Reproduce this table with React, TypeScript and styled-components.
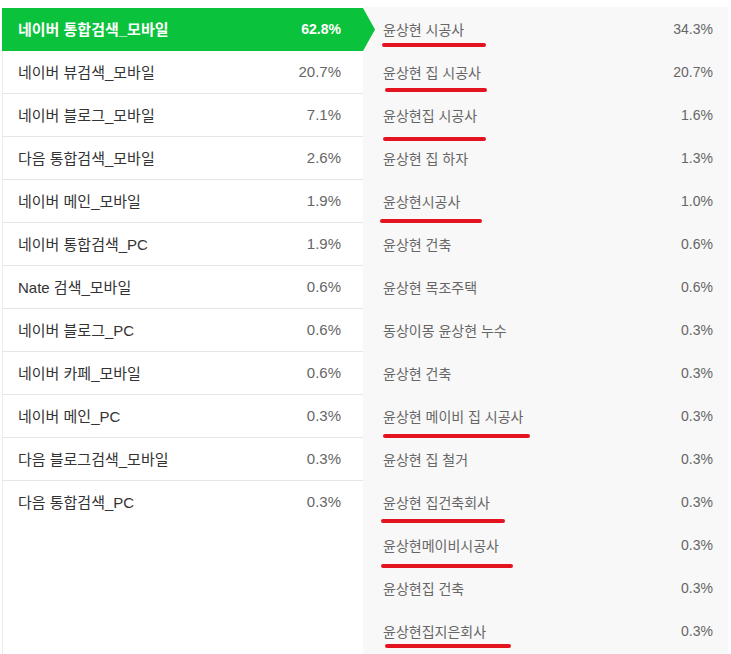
import React from "react";
import styled, { createGlobalStyle } from "styled-components";

const Global = createGlobalStyle`
  html, body { margin: 0; padding: 0; background: #ffffff; }
  body { font-family: "Liberation Sans", "Noto Sans CJK KR", sans-serif; }
`;

const Page = styled.div`
  display: flex;
  padding: 8px 3px 0 2px;
  height: 654px;
  box-sizing: border-box;
  overflow: hidden;
`;

const LeftPanel = styled.div`
  width: 361px;
  flex: none;
  border-left: 1px solid #ececec;
  box-sizing: border-box;
  background: #fff;
`;

const LeftRow = styled.div<{ $active?: boolean; $last?: boolean }>`
  position: relative;
  height: 43px;
  box-sizing: border-box;
  display: flex;
  align-items: center;
  justify-content: space-between;
  padding: 0 22px 2px 15px;
  margin-left: ${(p) => (p.$active ? "-1px" : "0")};
  padding-left: ${(p) => (p.$active ? "16px" : "15px")};
  background: ${(p) => (p.$active ? "#0bc23c" : "transparent")};
  border-bottom: ${(p) => (p.$active || p.$last ? "none" : "1px solid #e6e6e6")};
  color: ${(p) => (p.$active ? "#fff" : "#333")};
  font-weight: ${(p) => (p.$active ? 700 : 400)};
  z-index: ${(p) => (p.$active ? 2 : 0)};
`;

const Arrow = styled.svg`
  position: absolute;
  right: -12px;
  top: 0;
  width: 12px;
  height: 43px;
`;

const Name = styled.span<{ $size: number }>`
  font-size: ${(p) => p.$size}px;
  white-space: nowrap;
`;

const Pct = styled.span<{ $active?: boolean; $size: number }>`
  font-size: ${(p) => p.$size}px;
  color: ${(p) => (p.$active ? "#fff" : "#666")};
`;

const RightPanel = styled.div`
  flex: 1;
  background: #f8f8f8;
  margin-top: -1px;
  padding-top: 1px;
`;

const RightRow = styled.div`
  position: relative;
  height: 43px;
  box-sizing: border-box;
  display: flex;
  align-items: center;
  justify-content: space-between;
  padding: 0 15px 2px 20px;
  color: #666;
`;

const Mark = styled.span`
  position: absolute;
  height: 4px;
  border-radius: 2px;
  background: #e3141f;
`;

const leftData: [string, string][] = [
  ["네이버 통합검색_모바일", "62.8%"],
  ["네이버 뷰검색_모바일", "20.7%"],
  ["네이버 블로그_모바일", "7.1%"],
  ["다음 통합검색_모바일", "2.6%"],
  ["네이버 메인_모바일", "1.9%"],
  ["네이버 통합검색_PC", "1.9%"],
  ["Nate 검색_모바일", "0.6%"],
  ["네이버 블로그_PC", "0.6%"],
  ["네이버 카페_모바일", "0.6%"],
  ["네이버 메인_PC", "0.3%"],
  ["다음 블로그검색_모바일", "0.3%"],
  ["다음 통합검색_PC", "0.3%"],
];

type R = { name: string; pct: string; mark?: [number, number, number] };

const rightData: R[] = [
  { name: "윤상현 시공사", pct: "34.3%", mark: [35, 19, 104] },
  { name: "윤상현 집 시공사", pct: "20.7%", mark: [37, 22, 102] },
  { name: "윤상현집 시공사", pct: "1.6%", mark: [43, 20, 103] },
  { name: "윤상현 집 하자", pct: "1.3%" },
  { name: "윤상현시공사", pct: "1.0%", mark: [39, 17, 102] },
  { name: "윤상현 건축", pct: "0.6%" },
  { name: "윤상현 목조주택", pct: "0.6%" },
  { name: "동상이몽 윤상현 누수", pct: "0.3%" },
  { name: "윤상현 건축", pct: "0.3%" },
  { name: "윤상현 메이비 집 시공사", pct: "0.3%", mark: [39, 20, 147] },
  { name: "윤상현 집 철거", pct: "0.3%" },
  { name: "윤상현 집건축회사", pct: "0.3%", mark: [38, 18, 124] },
  { name: "윤상현메이비시공사", pct: "0.3%", mark: [40, 18, 132] },
  { name: "윤상현집 건축", pct: "0.3%" },
  { name: "윤상현집지은회사", pct: "0.3%", mark: [34, 22, 126] },
];

export default function App() {
  return (
    <>
      <Global />
      <Page>
        <LeftPanel>
          {leftData.map(([n, p], i) => (
            <LeftRow key={i} $active={i === 0} $last={i === leftData.length - 1}>
              <Name $size={15}>{n}</Name>
              <Pct $active={i === 0} $size={i === 0 ? 14 : 15}>
                {p}
              </Pct>
              {i === 0 && (
                <Arrow viewBox="0 0 12 43" preserveAspectRatio="none">
                  <polygon points="0,0 12,21.5 0,43" fill="#0bc23c" />
                </Arrow>
              )}
            </LeftRow>
          ))}
        </LeftPanel>
        <RightPanel>
          {rightData.map((r, i) => (
            <RightRow key={i}>
              <Name $size={14}>{r.name}</Name>
              <Pct $size={14}>{r.pct}</Pct>
              {r.mark && (
                <Mark
                  style={{ top: r.mark[0], left: r.mark[1], width: r.mark[2] }}
                />
              )}
            </RightRow>
          ))}
        </RightPanel>
      </Page>
    </>
  );
}
